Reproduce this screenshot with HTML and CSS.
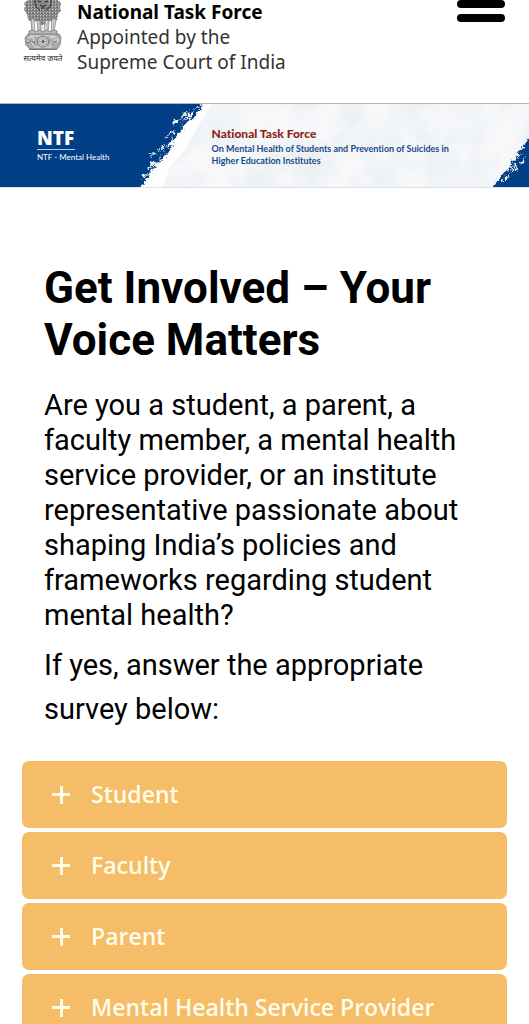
FILE: index.html
```
<!DOCTYPE html>
<html lang="en">
<head>
<meta charset="utf-8">
<meta name="viewport" content="width=device-width, initial-scale=1">
<title>National Task Force</title>
<link rel="stylesheet" href="styles.css">
</head>
<body>
<header class="site-header">
  <div class="emblem">
    <svg class="emblem-art" viewBox="0 0 40 51" role="img" aria-label="State Emblem of India">
      <defs>
        <pattern id="mane" width="3" height="3" patternUnits="userSpaceOnUse">
          <rect width="3" height="3" fill="#999"/>
          <path d="M0 1q1 1 2 0M1.500 2.500q1 1 2 0" fill="none" stroke="#444" stroke-width=".7"/>
          <circle cx="2.500" cy=".7" r=".5" fill="#ddd"/>
        </pattern>
      </defs>
      <path d="M5 0h30l3 3-1 5 1 3-3 3-1 6-4 2-3-1-3 4h-8l-3-4-4 1-4-2-1-6-3-4 1-4-1-3z" fill="url(#mane)"/>
      <path d="M14 0h12v5l-3 4h-6l-3-4z" fill="#888"/>
      <path d="M15 1l3 1M25 1l-3 1M17 5q3 3 6 0M18 8h4M12 0q-1 7 5 10M28 0q1 7-5 10" fill="none" stroke="#222"/>
      <path d="M8 19l1 13h3l-1-13zM14 20l1 13h3l-1-12zM22 21l-1 12h4l1-13zM29 19l-1 13h3l2-13z" fill="#ddd" stroke="#666" stroke-width=".6"/>
      <path d="M9 21v9M16 22v9M24 22v9M31 21l-1 9M19 25v7" stroke="#888" stroke-width=".6"/>
      <path d="M6 31l4-1 3 2 3-2 4 2 4-2 3 2 4-2 3 1v4H6z" fill="#bbb" stroke="#666" stroke-width=".7"/>
      <path d="M5 34h31l2 3-1 8-3 4H7l-4-4-1-7z" fill="#aaa" stroke="#777" stroke-width=".8"/>
      <path d="M5 38l5-1 1 3-4 2-3-1M8 42l3 4M27 38l6-1 3 3-3 3h-4l-2 3M30 40h5M11 47h18M7 36h25" fill="none" stroke="#e5e5e5"/>
      <path d="M4 43l5-2 3 2M29 44l5-3" fill="none" stroke="#555" stroke-width=".8"/>
      <circle cx="20" cy="41.500" r="5.500" fill="#d5d5d5" stroke="#666" stroke-width=".8"/>
      <circle cx="20" cy="41.500" r="3.800" fill="none" stroke="#777" stroke-width=".8" stroke-dasharray=".8 .8"/>
      <path d="M16 41.500h8M20 37.500v8M17 38.500l6 6M23 38.500l-6 6" stroke="#888" stroke-width=".6"/>
      <circle cx="20" cy="41.500" r="1.200" fill="#555"/>
      <path d="M6 49.500h28" stroke="#777"/>
    </svg>
    <span class="motto" lang="hi">सत्यमेव जयते</span>
  </div>
  <p class="site-name"><strong>National Task Force</strong><br>Appointed by the<br>Supreme Court of India</p>
  <button class="menu-button" type="button" aria-label="Open menu">
    <span class="menu-bar"></span><span class="menu-bar"></span>
  </button>
</header>

<section class="banner" aria-label="National Task Force">
  <svg class="banner-art" viewBox="0 0 529 83" preserveAspectRatio="none" aria-hidden="true">
    <defs>
      <filter id="rough" x="-10%" y="-10%" width="120%" height="120%" color-interpolation-filters="sRGB">
        <feTurbulence type="fractalNoise" baseFrequency=".3" numOctaves="3" seed="4"/>
        <feDisplacementMap in="SourceGraphic" scale="7" xChannelSelector="R" yChannelSelector="G"/>
      </filter>
      <filter id="plaster" x="0" y="0" width="100%" height="100%">
        <feTurbulence type="fractalNoise" baseFrequency=".025" numOctaves="4" seed="8"/>
        <feColorMatrix values="0 0 0 0 .72  0 0 0 0 .76  0 0 0 0 .8  .9 0 0 0 -.3"/>
      </filter>
    </defs>
    <rect width="529" height="83" fill="#f6f8fa"/>
    <rect width="529" height="83" filter="url(#plaster)"/>
    <path d="M200 0h12l-16 26-10 18-16 19-8 20h-24l20-38z" fill="#fff"/>
    <g fill="#023f86" filter="url(#rough)">
      <path d="M-20-20h228L202 0l-13 10-6 7-5 11-6 6-5 8-5 8-5 7-6 9-5 7-5 10-5 14H-20z"/>
      <path d="M204 0l-14 19 3-12zM192 12l-14 17 5-12zM184 24l-13 14 5-11zM174 40l-13 14 5-11zM173 44l-16 16 6-12zM164 53l-14 11 7-9zM157 62l-11 9 5-7zM150 70l-8 13 1-9z"/>
      <path d="M545 22v80h-62l11-20 9-7 4-8 7-4 4-9 5-5 2-11 6-5z"/>
      <path d="M494 82l12-15-3 9zM502 72l12-12-5 9zM508 63l12-14-3 9zM517 51l10-14-2 12z"/>
    </g>
    <path d="M190 6l-10 9 3-6zM183 13l-13 10 5-7zM176 27l-11 8 4-6zM167 41l-9 7 4-6zM158 50l-7 2-3-3zM159 57l-12 9 5-8zM148 70l-6 6 1-5zM519 61l7-9-2 7zM501 78l9-10-3 8zM511 68l7-7-2 7z" fill="#e8f1f7" filter="url(#rough)"/>
  </svg>
  <div class="brand"><strong class="brand-short">NTF</strong><span class="brand-full">NTF - Mental Health</span></div>
  <div class="banner-copy">
    <strong class="banner-title">National Task Force</strong>
    <p class="banner-text">On Mental Health of Students and Prevention of Suicides in Higher Education Institutes</p>
  </div>
</section>

<main class="content">
  <div class="intro">
    <h1 class="title">Get Involved – Your Voice Matters</h1>
    <p class="lead">Are you a student, a parent, a faculty member, a mental health service provider, or an institute representative passionate about shaping India’s policies and frameworks regarding student mental health?</p>
    <p class="prompt">If yes, answer the appropriate survey below:</p>
  </div>
  <div class="surveys">
    <button class="survey" type="button" aria-expanded="false"><span class="plus"></span>Student</button>
    <button class="survey" type="button" aria-expanded="false"><span class="plus"></span>Faculty</button>
    <button class="survey" type="button" aria-expanded="false"><span class="plus"></span>Parent</button>
    <button class="survey" type="button" aria-expanded="false"><span class="plus"></span>Mental Health Service Provider</button>
  </div>
</main>
</body>
</html>
```
FILE: styles.css
```
* { box-sizing: border-box; }
html { overflow: hidden; }
body { margin: 0; background: #fff; color: #000; font-family: Roboto, sans-serif; }
p, h1 { margin: 0; }
button { border: 0; font: inherit; cursor: pointer; }

.site-header { display: flex; align-items: flex-start; padding: 0 24px 28px 22px; border-bottom: 1px solid #b5b5b5; }
.emblem { display: flex; flex-direction: column; align-items: center; width: 42px; margin-right: 13px; }
.emblem-art { display: block; width: 40px; }
.motto { font: 8px/14px "Noto Sans", "Noto Sans Devanagari", sans-serif; white-space: nowrap; color: #222; }
.site-name { font: 19px/25px "Noto Sans", sans-serif; color: #333; }
.site-name strong { color: #000; font-weight: 700; }
.menu-button { display: flex; flex-direction: column; gap: 6px; margin-left: auto; padding: 0; background: none; }
.menu-bar { width: 48px; height: 8px; border-radius: 4px; background: #000; }

.banner { position: relative; display: flex; align-items: center; min-height: 84px; border-bottom: 1px solid #dde2e6; overflow: hidden; }
.banner-art { position: absolute; inset: 0; width: 100%; height: 100%; }
.brand { position: relative; flex: 0 0 40%; padding-left: 37px; color: #fff; font-family: Lato, sans-serif; }
.brand-short { display: block; width: 38px; border-bottom: 1px solid #b8cde0; font: 800 19px/22px "Open Sans", sans-serif; }
.brand-full { display: block; font-size: 8px; line-height: 14px; }
.banner-copy { position: relative; flex: 1; padding-right: 70px; font-family: Lato, sans-serif; font-variant-ligatures: none; }
.banner-title { display: block; color: #8d2418; font-size: 12px; line-height: 18px; font-weight: 900; }
.banner-text { color: #154b83; font-size: 9px; line-height: 12px; font-weight: 700; }

.content { padding: 74px 22px 0; }
.intro { padding: 0 22px; }
.title { font-size: 44px; line-height: 52px; font-weight: 700; }
.lead { margin-top: 22px; font-size: 29px; line-height: 35px; }
.prompt { margin-top: 10px; font-size: 29px; line-height: 44px; }
.surveys { display: grid; gap: 4px; margin-top: 30px; }
.survey { display: flex; align-items: center; gap: 21px; padding: 16px 30px; border-radius: 7px; background: #f5bd67; color: #fffbe9; font: 600 23px/35px "Open Sans", sans-serif; text-align: left; }
.plus { width: 18px; height: 18px; background: linear-gradient(#fffbe9, #fffbe9) center / 18px 3px no-repeat, linear-gradient(#fffbe9, #fffbe9) center / 3px 18px no-repeat; }
```
